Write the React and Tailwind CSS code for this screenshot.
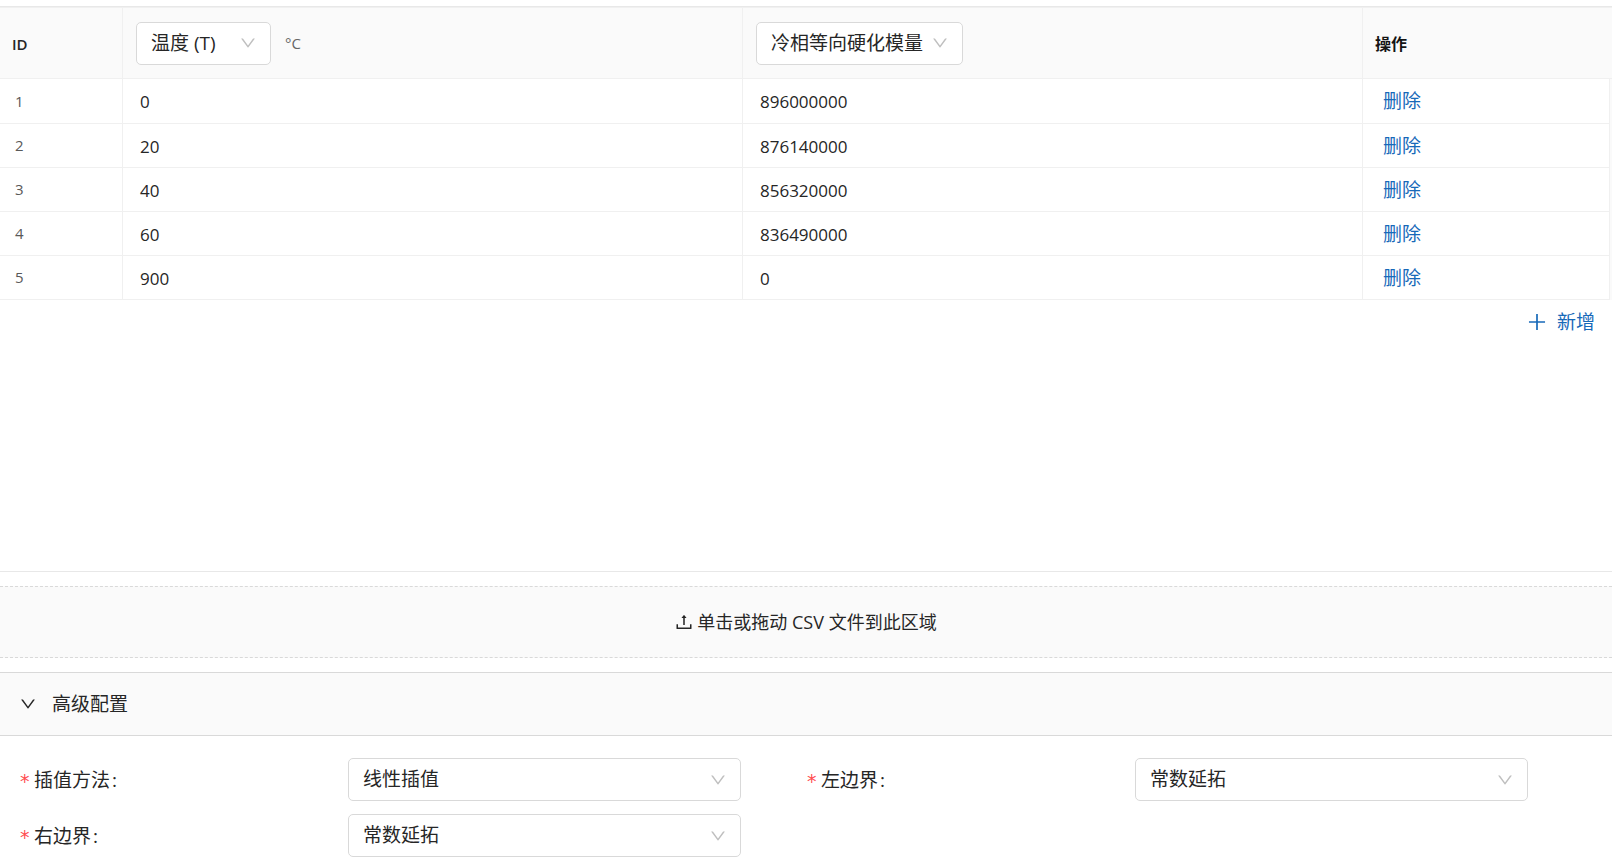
import React from "react";

const rows = [
  { id: 1, temperature: "0", modulus: "896000000" },
  { id: 2, temperature: "20", modulus: "876140000" },
  { id: 3, temperature: "40", modulus: "856320000" },
  { id: 4, temperature: "60", modulus: "836490000" },
  { id: 5, temperature: "900", modulus: "0" },
];

function DownIcon({ className }) {
  return (
    <svg viewBox="64 64 896 896" fill="currentColor" aria-hidden="true" className={className}>
      <path d="M884 256h-75c-5.1 0-9.9 2.5-12.9 6.6L512 654.2 227.9 262.6c-3-4.1-7.8-6.6-12.9-6.6h-75c-6.5 0-10.3 7.4-6.5 12.7l352.6 486.1c12.8 17.6 39 17.6 51.7 0l352.6-486.1c3.9-5.3.1-12.7-6.4-12.7z" />
    </svg>
  );
}

function UploadIcon({ className }) {
  return (
    <svg viewBox="64 64 896 896" fill="currentColor" aria-hidden="true" className={className}>
      <path d="M400 317.7h73.9V656c0 4.4 3.6 8 8 8h60c4.4 0 8-3.6 8-8V317.7H624c6.7 0 10.4-7.7 6.3-12.9L518.3 163a8 8 0 0 0-12.6 0l-112 141.7c-4.1 5.3-.4 13 6.3 13zM878 626h-60c-4.4 0-8 3.6-8 8v154H214V634c0-4.4-3.6-8-8-8h-60c-4.4 0-8 3.6-8 8v198c0 17.7 14.3 32 32 32h684c17.7 0 32-14.3 32-32V634c0-4.4-3.6-8-8-8z" />
    </svg>
  );
}

function PlusIcon({ className }) {
  return (
    <svg viewBox="64 64 896 896" fill="currentColor" aria-hidden="true" className={className}>
      <path d="M482 152h60q8 0 8 8v704q0 8-8 8h-60q-8 0-8-8V160q0-8 8-8z" />
      <path d="M192 474h672q8 0 8 8v60q0 8-8 8H160q-8 0-8-8v-60q0-8 8-8z" />
    </svg>
  );
}

function Select({ id, label, options, className }) {
  return (
    <span className={`relative block ${className}`}>
      <select
        id={id}
        aria-label={label}
        className="block h-[43px] w-full appearance-none rounded-[5px] border border-[#d9d9d9] bg-white pr-8 pl-3.5 text-[19px] font-normal text-[#262626]"
      >
        {options.map((option) => (
          <option key={option}>{option}</option>
        ))}
      </select>
      <DownIcon className="pointer-events-none absolute top-1/2 right-[15px] size-4 -translate-y-1/2 text-[#bfbfbf]" />
    </span>
  );
}

function Field({ id, label, options }) {
  return (
    <div className="flex items-center">
      <label htmlFor={id} className="flex w-5/12 items-center text-[19px] leading-7">
        <span className="mr-1 w-2.5 pt-0.5 font-['DejaVu_Sans',sans-serif] text-[#ff4d4f]">*</span>
        {label}
        <span className="ml-0.5">:</span>
      </label>
      <Select id={id} options={options} className="w-1/2" />
    </div>
  );
}

export default function App() {
  return (
    <main className="flex min-h-screen flex-col bg-white pt-1.5 font-['Open_Sans','Noto_Sans_CJK_SC',sans-serif] text-[#262626]">
      <section className="flex-1 border-t border-b border-[#e8e8e8]">
        <table className="w-full table-fixed border-separate border-spacing-0 border-t border-[#f0f0f0] text-left">
          <colgroup>
            <col className="w-[123px]" />
            <col />
            <col />
            <col className="w-[247px]" />
            <col className="w-[2px]" />
          </colgroup>
          <thead>
            <tr className="h-[71px] bg-[#fafafa]">
              <th className="border-r border-b border-[#f0f0f0] pt-0.5 pr-0 pb-0 pl-3 text-[15px] font-semibold">ID</th>
              <th className="border-r border-b border-[#f0f0f0] py-0 pr-0 pl-[13px] font-normal">
                <div className="flex items-center gap-3.5">
                  <Select label="横轴变量" options={["温度 (T)"]} className="w-[135px]" />
                  <span className="text-[15px] text-[#666666]">°C</span>
                </div>
              </th>
              <th className="border-r border-b border-[#f0f0f0] py-0 pr-0 pl-[13px] font-normal">
                <Select label="纵轴变量" options={["冷相等向硬化模量"]} className="w-[207px]" />
              </th>
              <th colSpan={2} className="border-b border-[#f0f0f0] pt-0.5 pr-0 pb-0 pl-3 text-[16px] font-bold text-[#141414]">
                操作
              </th>
            </tr>
          </thead>
          <tbody>
            {rows.map((row) => (
              <tr key={row.id} className="h-11 first:h-[45px]">
                <td className="border-r border-b border-[#f0f0f0] py-0 pr-0 pl-[15px] text-[15px] text-[#595959]">{row.id}</td>
                <td className="border-r border-b border-[#f0f0f0] pt-0.5 pr-0 pb-0 pl-[17px] text-[17px]">{row.temperature}</td>
                <td className="border-r border-b border-[#f0f0f0] pt-0.5 pr-0 pb-0 pl-[17px] text-[17px]">{row.modulus}</td>
                <td className="border-r border-b border-[#f0f0f0] py-0 pr-0 pl-5">
                  <button type="button" className="block text-[19px] leading-7 text-[#1769b9]">
                    删除
                  </button>
                </td>
                <td className="bg-[#fafafa] p-0" />
              </tr>
            ))}
          </tbody>
        </table>
        <div className="flex justify-end pr-[17px]">
          <button type="button" className="flex h-11 items-center gap-2.5 text-[19px] leading-7 text-[#1769b9]">
            <PlusIcon className="size-5" />
            新增
          </button>
        </div>
      </section>

      <button
        type="button"
        className="my-3.5 flex h-[72px] w-full shrink-0 items-center justify-center gap-1 border-y border-dashed border-[#d9d9d9] bg-[#fafafa] text-[18px] leading-7"
      >
        <UploadIcon className="size-[18px]" />
        单击或拖动 CSV 文件到此区域
      </button>

      <section className="border-t border-[#d9d9d9]">
        <h2>
          <button
            type="button"
            aria-expanded="true"
            className="flex h-[63px] w-full items-center gap-4 border-b border-[#d9d9d9] bg-[#fafafa] px-5 text-[19px] leading-7"
          >
            <DownIcon className="size-4" />
            高级配置
          </button>
        </h2>
        <form className="grid grid-cols-2 gap-y-[13px] pt-[22px] pr-[18px] pb-2 pl-5">
          <Field id="interpolation" label="插值方法" options={["线性插值"]} />
          <Field id="left-boundary" label="左边界" options={["常数延拓"]} />
          <Field id="right-boundary" label="右边界" options={["常数延拓"]} />
        </form>
      </section>
    </main>
  );
}
